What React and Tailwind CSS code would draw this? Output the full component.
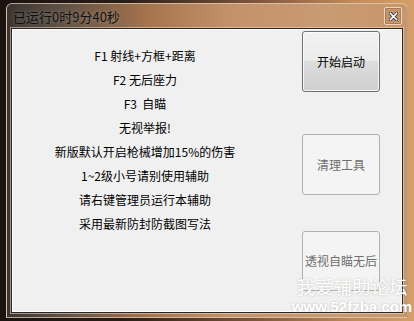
export default function App() {
  const lines = [
    "F1 射线+方框+距离",
    "F2 无后座力",
    "F3  自瞄",
    "无视举报!",
    "新版默认开启枪械增加15%的伤害",
    "1~2级小号请别使用辅助",
    "请右键管理员运行本辅助",
    "采用最新防封防截图写法",
  ];
  const cjk = { fontFamily: '"Noto Sans CJK SC", "Noto Sans", sans-serif' };
  return (
    <div
      className="w-[414px] h-[321px] overflow-hidden relative pt-[3px] pl-[6px] bg-[linear-gradient(90deg,#1a1310_0%,#2a1d16_30%,#7a5238_60%,#c08a5a_85%,#d6a06a_100%)]"
      style={cjk}
    >
      <div className="w-[402px] h-[315px] rounded-t-[6px] border border-[#e4d2bf]/70 flex flex-col px-[4px] pb-[4px] bg-[linear-gradient(90deg,#3a3531_0%,#5a4e44_12%,#a5734d_35%,#c2916a_55%,#c99b72_80%,#c8966a_100%)]">
        <div className="h-[24px] flex items-center justify-between pl-[2px] pr-[1px] shrink-0">
          <span className="text-[13px] leading-none text-[#111111] [text-shadow:0_0_5px_rgba(200,195,185,0.5)]">
            已运行0时9分40秒
          </span>
          <div className="w-[18px] h-[18px] rounded-[2px] border border-[#ead6c0] bg-[#c3936a] flex items-center justify-center shadow-[inset_0_0_0_1px_rgba(120,80,50,0.35)]">
            <svg width="9" height="9" viewBox="0 0 9 9">
              <path d="M1.5 1.5 L7.5 7.5 M7.5 1.5 L1.5 7.5" stroke="#3a3a3a" strokeWidth="3.2" strokeLinecap="square" />
              <path d="M1.5 1.5 L7.5 7.5 M7.5 1.5 L1.5 7.5" stroke="#ffffff" strokeWidth="1.6" strokeLinecap="square" />
            </svg>
          </div>
        </div>
        <div className="flex-1 border border-[#2b2521] shadow-[0_0_0_1px_rgba(240,225,210,0.55)]">
          <div className="w-full h-full border border-white bg-[#f0f0f0] flex">
            <div className="w-[264px] pt-[14px] flex flex-col items-center">
              {lines.map((t) => (
                <div key={t} className="h-[24px] leading-[24px] text-[12px] text-black whitespace-pre">
                  {t}
                </div>
              ))}
            </div>
            <div className="ml-[25px] w-[78px] flex flex-col pt-[1px]">
              <div className="h-[61px] rounded-[3px] border border-[#707070] bg-[linear-gradient(180deg,#f2f2f2_0%,#ebebeb_48%,#dddddd_50%,#cfcfcf_100%)] shadow-[inset_0_0_0_1px_rgba(255,255,255,0.8)] flex items-center justify-center text-[12px] text-black">
                开始启动
              </div>
              <div className="mt-[42px] h-[61px] rounded-[3px] border border-[#adb2b5] bg-[#f4f4f4] flex items-center justify-center text-[12px] text-[#6f6f6f]">
                清理工具
              </div>
              <div className="mt-[36px] h-[60px] rounded-[3px] border border-[#adb2b5] bg-[#f4f4f4] flex items-center justify-center text-[12px] text-[#6f6f6f]">
                透视自瞄无后
              </div>
            </div>
          </div>
        </div>
      </div>
      <div className="absolute left-[295px] top-[275px] w-[114px] flex flex-col items-center text-white [text-shadow:0_0_2px_rgba(120,110,100,0.45)]">
        <div className="text-[18.5px] leading-[22px] whitespace-nowrap">我爱辅助论坛</div>
        <div
          className="text-[15px] leading-[20px] font-bold whitespace-nowrap"
          style={{ fontFamily: '"Liberation Sans", Arial, sans-serif' }}
        >
          www.52fzba.com
        </div>
      </div>
    </div>
  );
}
